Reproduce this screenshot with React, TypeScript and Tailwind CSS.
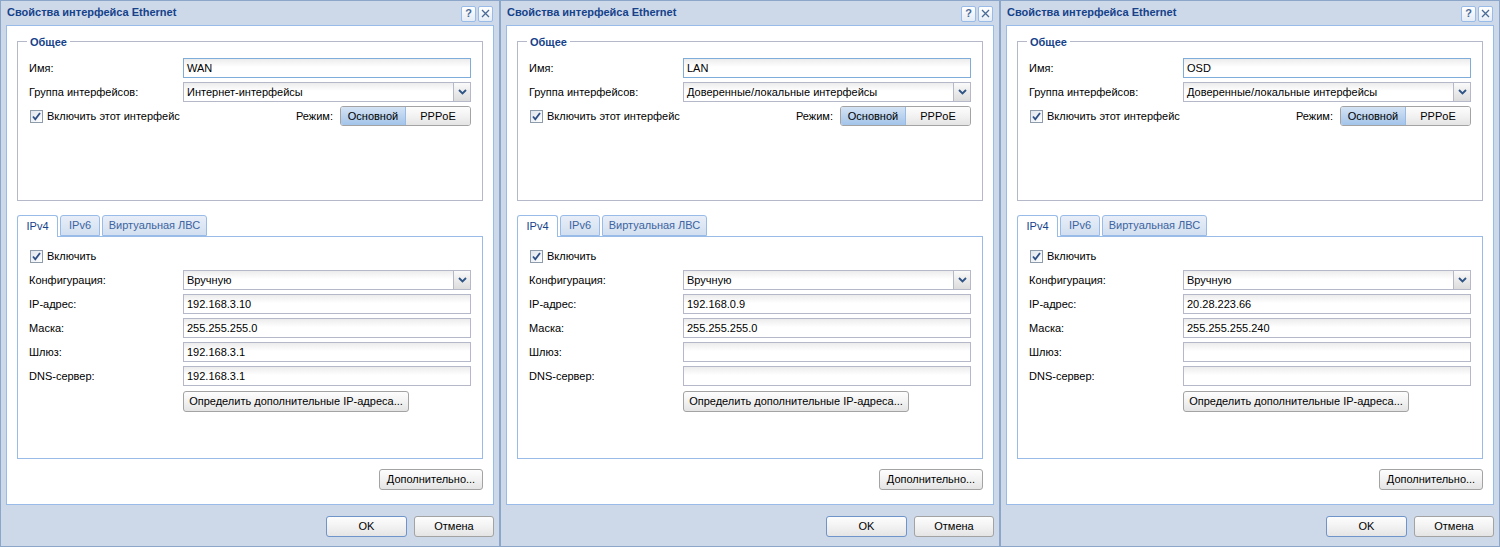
import React from 'react';

interface IfaceProps {
  name: string;
  group: string;
  ip: string;
  mask: string;
  gateway: string;
  dns: string;
}

const ifaces: IfaceProps[] = [
  { name: 'WAN', group: 'Интернет-интерфейсы', ip: '192.168.3.10', mask: '255.255.255.0', gateway: '192.168.3.1', dns: '192.168.3.1' },
  { name: 'LAN', group: 'Доверенные/локальные интерфейсы', ip: '192.168.0.9', mask: '255.255.255.0', gateway: '', dns: '' },
  { name: 'OSD', group: 'Доверенные/локальные интерфейсы', ip: '20.28.223.66', mask: '255.255.255.240', gateway: '', dns: '' },
];

const Checkbox: React.FC<{ label: string }> = ({ label }) => (
  <div className="flex items-center gap-[4px] pl-[1px]">
    <div className="w-[13px] h-[13px] border border-[#8e9bab] bg-[linear-gradient(135deg,#dfe5ec,#ffffff)] flex items-center justify-center">
      <svg width="11" height="11" viewBox="0 0 11 11">
        <path d="M2 5.5 L4.3 8.3 L9 2" fill="none" stroke="#2d4f86" strokeWidth="1.8" />
      </svg>
    </div>
    <span>{label}</span>
  </div>
);

const TextField: React.FC<{ value: string; focused?: boolean }> = ({ value, focused }) => (
  <div
    className={`w-[288px] h-[20px] border ${focused ? 'border-[#7eadd9]' : 'border-[#b5b8c8]'} bg-[linear-gradient(#ececec,#ffffff_45%)] flex items-center px-[3px]`}
  >
    {value}
  </div>
);

const SelectField: React.FC<{ value: string }> = ({ value }) => (
  <div className="w-[288px] h-[20px] border border-[#b5b8c8] bg-[linear-gradient(#ececec,#ffffff_45%)] flex items-center">
    <span className="flex-1 px-[3px]">{value}</span>
    <div className="w-[17px] h-full border-l border-[#b5b8c8] bg-[linear-gradient(#fafafa,#dcdcdc)] flex items-center justify-center">
      <svg width="9" height="6" viewBox="0 0 9 6">
        <path d="M1 1 L4.5 4.5 L8 1" fill="none" stroke="#2f5486" strokeWidth="1.8" />
      </svg>
    </div>
  </div>
);

const Btn: React.FC<{ label: string; w: string; primary?: boolean }> = ({ label, w, primary }) => (
  <div
    className={`${w} h-[21px] rounded-[3px] border ${primary ? 'border-[#6e94c9]' : 'border-[#a3a3a3]'} bg-[linear-gradient(#fdfdfd,#f2f2f2_50%,#e4e4e4)] flex items-center justify-center text-black`}
  >
    {label}
  </div>
);

const Row: React.FC<{ label: string; children: React.ReactNode }> = ({ label, children }) => (
  <div className="flex items-center h-[20px]">
    <span className="w-[154px]">{label}</span>
    {children}
  </div>
);

const Dialog: React.FC<IfaceProps> = ({ name, group, ip, mask, gateway, dns }) => (
  <div className="w-[500px] h-[547px] shrink-0 flex flex-col bg-[#cdd9e8] border border-[#8ba6c9]">
    {/* Title bar */}
    <div className="h-[24px] flex items-center justify-between pl-[6px] pr-[6px]">
      <span className="font-bold text-[#15428b] text-[11px] -mt-[1px]">Свойства интерфейса Ethernet</span>
      <div className="flex gap-[2px] mt-[1px]">
        <div className="w-[15px] h-[16px] border border-[#99bbe8] rounded-[2px] bg-[linear-gradient(#ffffff,#e4ecf6)] flex items-center justify-center text-[#4a6a96] font-bold text-[11px]">?</div>
        <div className="w-[15px] h-[16px] border border-[#99bbe8] rounded-[2px] bg-[linear-gradient(#ffffff,#e4ecf6)] flex items-center justify-center">
          <svg width="9" height="9" viewBox="0 0 9 9">
            <path d="M1 1 L8 8 M8 1 L1 8" stroke="#4a6a96" strokeWidth="1.3" />
          </svg>
        </div>
      </div>
    </div>

    {/* Body */}
    <div className="mx-[5px] h-[480px] bg-white border border-[#99bbe8] flex flex-col px-[10px] pt-[15px]">
      {/* Общее */}
      <div className="relative h-[160px] border border-[#b5b8c8] pt-[16px] px-[11px] flex flex-col gap-[4px]">
        <span className="absolute -top-[6px] left-[9px] bg-white px-[3px] font-bold text-[#15428b]">Общее</span>
        <Row label="Имя:">
          <TextField value={name} focused />
        </Row>
        <Row label="Группа интерфейсов:">
          <SelectField value={group} />
        </Row>
        <div className="flex items-center justify-between h-[20px]">
          <Checkbox label="Включить этот интерфейс" />
          <div className="flex items-center gap-[7px]">
            <span>Режим:</span>
            <div className="flex h-[20px] rounded-[3px] border border-[#a3a3a3] overflow-hidden">
              <div className="w-[65px] flex items-center justify-center bg-[linear-gradient(#d4e3f4,#bcd3ee_50%,#a3c4ea)] border-r border-[#99bbe8]">Основной</div>
              <div className="w-[64px] flex items-center justify-center bg-[linear-gradient(#fdfdfd,#f2f2f2_50%,#e4e4e4)]">PPPoE</div>
            </div>
          </div>
        </div>
      </div>

      {/* Tabs */}
      <div className="flex items-end gap-[2px] mt-[14px] h-[21px]">
        <div className="relative z-10 w-[41px] h-[22px] -mb-px bg-white border border-b-0 border-[#99bbe8] rounded-t-[3px] flex items-center justify-center text-[#15428b]">IPv4</div>
        <div className="w-[40px] h-[21px] bg-[linear-gradient(#e8eef8,#d2dff0)] border border-[#99bbe8] rounded-t-[3px] flex items-center justify-center text-[#3c64a0]">IPv6</div>
        <div className="w-[105px] h-[21px] bg-[linear-gradient(#e8eef8,#d2dff0)] border border-[#99bbe8] rounded-t-[3px] flex items-center justify-center text-[#3c64a0]">Виртуальная ЛВС</div>
      </div>
      <div className="h-[223px] border border-[#99bbe8] pt-[10px] px-[11px] flex flex-col">
        <div className="h-[18px] flex items-center">
          <Checkbox label="Включить" />
        </div>
        <div className="flex flex-col gap-[4px] mt-[5px]">
          <Row label="Конфигурация:">
            <SelectField value="Вручную" />
          </Row>
          <Row label="IP-адрес:">
            <TextField value={ip} />
          </Row>
          <Row label="Маска:">
            <TextField value={mask} />
          </Row>
          <Row label="Шлюз:">
            <TextField value={gateway} />
          </Row>
          <Row label="DNS-сервер:">
            <TextField value={dns} />
          </Row>
        </div>
        <div className="pl-[154px] mt-[5px]">
          <Btn label="Определить дополнительные IP-адреса..." w="w-[226px]" />
        </div>
      </div>
      <div className="flex justify-end mt-[10px]">
        <Btn label="Дополнительно..." w="w-[104px]" />
      </div>
    </div>

    {/* Footer */}
    <div className="flex justify-end gap-[7px] pr-[5px] pt-[11px]">
      <Btn label="OK" w="w-[81px]" primary />
      <Btn label="Отмена" w="w-[80px]" />
    </div>
  </div>
);

export default function App() {
  return (
    <div className="flex w-[1500px] h-[547px] overflow-hidden text-[11px] text-black font-['Liberation_Sans',Arial,sans-serif] leading-[13px]">
      {ifaces.map((f) => (
        <Dialog key={f.name} {...f} />
      ))}
    </div>
  );
}
